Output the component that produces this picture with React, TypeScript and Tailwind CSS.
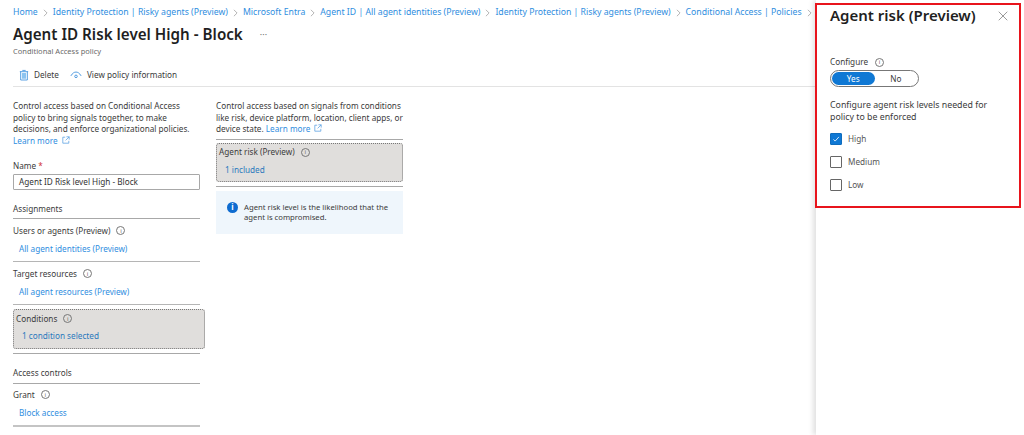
import { X } from "lucide-react";

const crumbs = [
  "Home",
  "Identity Protection | Risky agents (Preview)",
  "Microsoft Entra",
  "Agent ID | All agent identities (Preview)",
  "Identity Protection | Risky agents (Preview)",
  "Conditional Access | Policies",
];

function InfoDot({ className = "" }: { className?: string }) {
  return (
    <span
      className={`ml-[6px] inline-flex h-[9px] w-[9px] items-center justify-center rounded-full border border-[#777] text-[6px] leading-none text-[#666] ${className}`}
    >
      i
    </span>
  );
}

function ExternalIcon() {
  return (
    <svg viewBox="0 0 10 10" className="ml-1 inline-block h-[8px] w-[8px] align-baseline" fill="none" stroke="#4f9be0" strokeWidth="0.9">
      <path d="M4 1.500H1v7.500h7.500V6" />
      <path d="M5.500 1h3.500v3.500M9 1 4.500 5.500" />
    </svg>
  );
}

function LearnMore() {
  return (
    <span className="text-[#2f8ee0]">
      Learn more
      <ExternalIcon />
    </span>
  );
}

function Section({ label, link }: { label: string; link: string }) {
  return (
    <div className="h-[43px] border-b border-[#b5b5b5]">
      <div className="flex h-[22px] items-center pt-[1px]">
        {label}
        <InfoDot />
      </div>
      <div className="pl-[6px] pt-[2px] text-[#2f8ee0]">{link}</div>
    </div>
  );
}

function SelectedBox({ label, link, className }: { label: string; link: string; className: string }) {
  return (
    <div className={`rounded-[3px] border border-dotted border-[#777] bg-[#e0dedc] px-[2px] ${className}`}>
      <div className="flex h-[17px] items-center">
        {label}
        <InfoDot />
      </div>
      <div className="pl-[6px] pt-[3px] text-[#2a79bd]">{link}</div>
    </div>
  );
}

function Check({ label, checked }: { label: string; checked?: boolean }) {
  return (
    <div className="flex h-[12px] items-center gap-[6px]">
      <span
        className={`flex h-[12px] w-[12px] items-center justify-center rounded-[1px] border ${checked ? "border-[#0f6cbd] bg-[#0f78d4]" : "border-[#666] bg-white"}`}
      >
        {checked && (
          <svg viewBox="0 0 12 12" className="h-[10px] w-[10px]" fill="none" stroke="#fff" strokeWidth="1">
            <path d="M3 6.500 5 8.500 9.500 3.500" />
          </svg>
        )}
      </span>
      <span className="text-[#555]">{label}</span>
    </div>
  );
}

export default function App() {
  return (
    <div className="relative flex h-[435px] w-[1024px] overflow-hidden bg-white font-['Noto_Sans','Open_Sans',sans-serif] text-[8.200px] leading-[11.500px] text-[#3b3b3b]">
      <main className="w-[816px] shrink-0">
        <nav className="flex h-[24px] items-center whitespace-nowrap pl-[13px] pt-[1px] text-[8.700px] text-[#2f8ee0]">
          {crumbs.map((c, i) => (
            <span key={i} className="flex items-center">
              {c}
              <svg viewBox="0 0 6 10" className="mx-[5px] h-[8px] w-[5px]" fill="none" stroke="#8a8a8a" strokeWidth="0.8">
                <path d="M1 1l4 4-4 4" />
              </svg>
            </span>
          ))}
        </nav>

        <div className="pl-[13px]">
          <div className="flex h-[21px] items-center">
            <h1 className="text-[15.200px] font-semibold leading-[21px] text-[#1f1f1f]">Agent ID Risk level High - Block</h1>
            <span className="ml-[17px] text-[9px] text-[#777]">···</span>
          </div>
          <div className="mt-[1px] text-[7.500px] leading-[10px] text-[#6a6a6a]">Conditional Access policy</div>

          <div className="mt-[8px] flex h-[23px] items-center border-b border-[#e3e3e3] pl-[6px]">
            <svg viewBox="0 0 12 14" className="h-[12px] w-[10px]" fill="none" stroke="#3a8fdc" strokeWidth="1">
              <path d="M4 1.500h4M1 3h10M2 3v10h8V3" />
              <path d="M3.500 4.500h5v7h-5z" fill="#8cc4f0" stroke="none" />
            </svg>
            <span className="ml-[5px]">Delete</span>
            <svg viewBox="0 0 14 10" className="ml-[11px] h-[9px] w-[12px]" fill="none" stroke="#3a8fdc" strokeWidth="1">
              <path d="M1 5.500C3 2 5 1 7 1s4 1 6 4.500" />
              <circle cx="7" cy="6" r="1.500" />
            </svg>
            <span className="ml-[5px]">View policy information</span>
          </div>

          <div className="flex pt-[13px]">
            <div className="w-[203px] shrink-0">
              <p className="w-[190px]">
                Control access based on Conditional Access policy to bring signals together, to make decisions, and enforce organizational policies. <LearnMore />
              </p>
              <div className="w-[187px]">
                <div className="mt-[14px] leading-[12px]">
                  Name <span className="text-[#d13438]">*</span>
                </div>
                <div className="mt-[2px] flex h-[16px] items-center rounded-[1px] border border-[#a8a8a8] pl-[5px] text-[#333]">
                  Agent ID Risk level High - Block
                </div>
                <div className="mt-[13px] h-[16px] border-b border-[#a8a8a8] leading-[12px]">Assignments</div>
                <Section label="Users or agents (Preview)" link="All agent identities (Preview)" />
                <Section label="Target resources" link="All agent resources (Preview)" />
              </div>
              <SelectedBox label="Conditions" link="1 condition selected" className="mt-[4px] h-[40px] w-[192px]" />
              <div className="mt-[4px] w-[187px] border-t border-[#a8a8a8]">
                <div className="mt-[13px] h-[17px] border-b border-[#a8a8a8] leading-[12px]">Access controls</div>
                <div className="flex h-[21px] items-center">
                  Grant
                  <InfoDot />
                </div>
                <div className="pl-[6px] pt-[2px] text-[#2f8ee0]">Block access</div>
                <div className="mt-[6px] h-[2px] bg-[#c4c4c4]" />
              </div>
            </div>

            <div className="w-[187px] shrink-0">
              <p className="pb-[4px]">
                Control access based on signals from conditions like risk, device platform, location, client apps, or device state. <LearnMore />
              </p>
              <div className="border-t border-[#a8a8a8] pt-[3px]">
                <SelectedBox label="Agent risk (Preview)" link="1 included" className="h-[39px]" />
              </div>
              <div className="mt-[4px] border-t border-[#a8a8a8]" />
              <div className="mt-[4px] flex h-[43px] items-start gap-[6px] bg-[#eff6fc] pl-[11px] pt-[11px] text-[7.700px] leading-[10.500px]">
                <span className="flex h-[11px] w-[11px] shrink-0 items-center justify-center rounded-full bg-[#0f6cd0] text-[8px] font-bold leading-none text-white">
                  i
                </span>
                <span>Agent risk level is the likelihood that the agent is compromised.</span>
              </div>
            </div>
          </div>
        </div>
      </main>

      <aside className="relative z-10 h-[435px] flex-1 bg-white pl-[14px] shadow-[-3px_0_5px_rgba(0,0,0,0.12)]">
        <div className="flex h-[30px] items-center pt-[1px]">
          <h2 className="text-[15px] font-semibold leading-[21px] text-[#1f1f1f]">Agent risk (Preview)</h2>
          <X className="ml-[19px] h-[16px] w-[16px] text-[#666]" strokeWidth={1} />
        </div>
        <div className="mt-[26px] flex h-[12px] items-center">
          Configure
          <InfoDot className="ml-[7px]" />
        </div>
        <div className="mt-[2px] flex h-[17px] w-[89px] items-center rounded-full border border-[#777] p-[1px] text-center">
          <span className="h-[13px] w-[43px] rounded-full bg-[#0f78d4] leading-[13px] text-white">Yes</span>
          <span className="w-[43px]">No</span>
        </div>
        <p className="mt-[12px] w-[175px] text-[8.800px] leading-[12px]">Configure agent risk levels needed for policy to be enforced</p>
        <div className="mt-[10px] flex flex-col gap-[11px]">
          <Check label="High" checked />
          <Check label="Medium" />
          <Check label="Low" />
        </div>
      </aside>

      <div className="pointer-events-none absolute left-[815px] top-[3px] z-20 h-[205px] w-[206px] border-2 border-[#e8141c]" />
    </div>
  );
}
